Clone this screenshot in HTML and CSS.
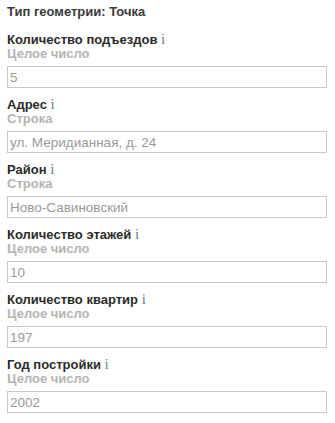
FILE: index.html
```html
<!DOCTYPE html>
<html lang="ru">
<head>
    <meta charset="UTF-8">
    <title>Свойства объекта</title>
    <link rel="stylesheet" href="styles.css">
</head>
<body>
    <div class="geom">Тип геометрии: Точка</div>
    <div class="fields">
        <div class="field">
            <div class="label">Количество подъездов <span class="info">i</span></div>
            <div class="type">Целое число</div>
            <input class="value" type="text" value="5" readonly>
        </div>
        <div class="field">
            <div class="label">Адрес <span class="info">i</span></div>
            <div class="type">Строка</div>
            <input class="value" type="text" value="ул. Меридианная, д. 24" readonly>
        </div>
        <div class="field">
            <div class="label">Район <span class="info">i</span></div>
            <div class="type">Строка</div>
            <input class="value" type="text" value="Ново-Савиновский" readonly>
        </div>
        <div class="field">
            <div class="label">Количество этажей <span class="info">i</span></div>
            <div class="type">Целое число</div>
            <input class="value" type="text" value="10" readonly>
        </div>
        <div class="field">
            <div class="label">Количество квартир <span class="info">i</span></div>
            <div class="type">Целое число</div>
            <input class="value" type="text" value="197" readonly>
        </div>
        <div class="field">
            <div class="label">Год постройки <span class="info">i</span></div>
            <div class="type">Целое число</div>
            <input class="value" type="text" value="2002" readonly>
        </div>
    </div>
</body>
</html>
```

FILE: styles.css
```css
body {
    margin: 0;
    padding: 5px 8px 0 7px;
    font-family: "Liberation Sans", Arial, sans-serif;
    font-size: 13px;
    color: #333;
    background: #fff;
}
.geom {
    font-weight: bold;
    line-height: 14px;
    color: #3a3a3a;
}
.fields {
    margin-top: 14px;
}
.field {
    margin-bottom: 10px;
}
.label {
    font-weight: bold;
    height: 14px;
    line-height: 14px;
    color: #2b2b2b;
}
.info {
    font-family: "Liberation Serif", serif;
    font-weight: normal;
    font-size: 15px;
    line-height: 12px;
    color: #6b7f8e;
}
.type {
    font-weight: bold;
    height: 14px;
    line-height: 14px;
    color: #b4b4b4;
}
.value {
    display: block;
    box-sizing: border-box;
    width: 100%;
    height: 22px;
    margin-top: 5px;
    padding: 0 2px;
    border: 1px solid #c4caca;
    font-family: "Liberation Sans", Arial, sans-serif;
    font-size: 13.5px;
    color: #9a9a9a;
    background: #fff;
    outline: none;
}
```
